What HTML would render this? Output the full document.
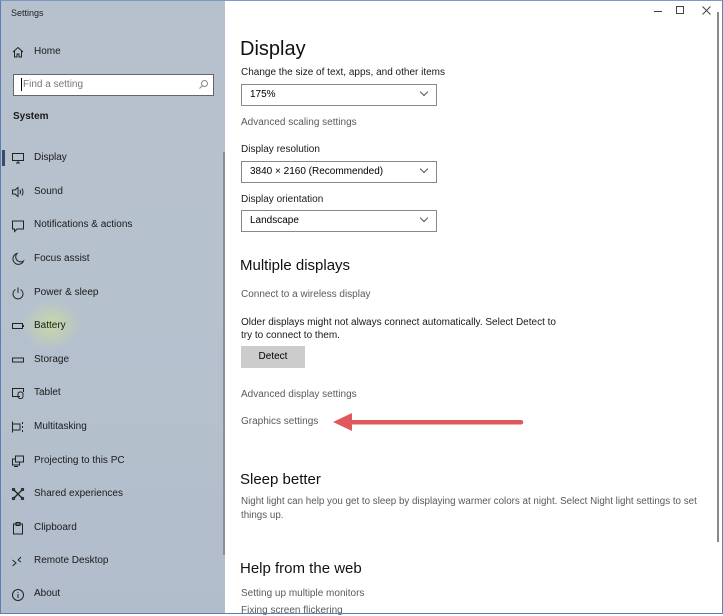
<!DOCTYPE html>
<html><head><meta charset="utf-8"><style>
*{margin:0;padding:0;box-sizing:border-box}
body{width:723px;height:614px;overflow:hidden;font-family:"Liberation Sans",sans-serif;background:#fff;position:relative;color:#000}
.a{position:absolute;white-space:nowrap}
#side{position:absolute;left:0;top:0;width:225px;height:614px;background:linear-gradient(180deg,#b6c1cd 0%,#b5c1cd 50%,#b2bdcb 100%);border-left:1px solid #5b7fb5}
.nav{position:absolute;left:33px;font-size:10px;color:#1a1a1a}
.ic{position:absolute;left:10px;width:14px;height:14px}
.t{font-size:10px;color:#1a1a1a}
.g{font-size:10px;color:#5a5a5a}
.dd{position:absolute;left:241px;width:196px;height:22px;border:1.5px solid #888;background:#fff;font-size:10px;padding:4px 8px}
.dd:after{content:"";position:absolute;right:9px;top:4px;width:5px;height:5px;border-right:1px solid #555;border-bottom:1px solid #555;transform:rotate(45deg)}
h2{position:absolute;font-weight:normal;font-size:15px;color:#111;white-space:nowrap}
</style></head><body>
<div style="position:absolute;left:0;top:0;width:723px;height:614px;border:1px solid #5b7fb5;border-top:1px solid #7a9ac8;z-index:5;pointer-events:none"></div>
<div id="side">
<div class="a" style="left:10px;top:8px;font-size:9px;color:#222">Settings</div>
<svg class="ic" style="top:45px" viewBox="0 0 14 14" fill="none" stroke="#222" stroke-width="1"><path d="M2 7 L7 2.5 L12 7 M3.5 6 V12 H6 V9 H8 V12 H10.5 V6"/></svg>
<div class="nav" style="top:46px">Home</div>
<div style="position:absolute;left:12px;top:74px;width:201px;height:22px;background:#fff;border:1.5px solid #666"></div>
<div style="position:absolute;left:20px;top:78px;width:1px;height:13px;background:#000"></div>
<div class="a" style="left:22px;top:79px;font-size:10px;color:#777">Find a setting</div>
<svg style="position:absolute;left:197px;top:79px;width:11px;height:11px" viewBox="0 0 11 11" fill="none" stroke="#888"><circle cx="6.5" cy="4.5" r="3"/><path d="M4.5 6.5 L1.5 9.5"/></svg>
<div class="a" style="left:12px;top:111px;font-size:10px;font-weight:bold;color:#1a1a1a">System</div>
<div style="position:absolute;left:1px;top:150px;width:3px;height:16px;background:#3b4a66"></div>
<div style="position:absolute;left:222px;top:152px;width:2px;height:403px;background:#8a8f96"></div>
<svg class="ic" style="top:151px" viewBox="0 0 14 14" fill="none" stroke="#222"><rect x="1.5" y="2.5" width="11" height="7"/><path d="M5 12 H9 M7 9.5 V12"/></svg><div class="nav" style="top:152px">Display</div>
<svg class="ic" style="top:185px" viewBox="0 0 14 14" fill="none" stroke="#222"><path d="M1.5 5 H4 L7 2.5 V11.5 L4 9 H1.5Z M9 5 Q10 7 9 9 M11 3.5 Q13 7 11 10.5"/></svg><div class="nav" style="top:186px">Sound</div>
<svg class="ic" style="top:219px" viewBox="0 0 14 14" fill="none" stroke="#222"><path d="M1.5 2 H12.5 V10 H6 L3.5 12.5 V10 H1.5Z"/></svg><div class="nav" style="top:219px">Notifications &amp; actions</div>
<svg class="ic" style="top:252px" viewBox="0 0 14 14" fill="none" stroke="#222"><path d="M6 1.5 A5.5 5.5 0 1 0 12.5 9 A5 5 0 0 1 6 1.5Z"/></svg><div class="nav" style="top:253px">Focus assist</div>
<svg class="ic" style="top:286px" viewBox="0 0 14 14" fill="none" stroke="#222"><path d="M4.5 3.5 A5 5 0 1 0 9.5 3.5 M7 1.5 V7"/></svg><div class="nav" style="top:287px">Power &amp; sleep</div>
<div style="position:absolute;left:20px;top:300px;width:60px;height:50px;border-radius:50%;background:radial-gradient(#c8d8a8,rgba(180,200,170,0) 70%)"></div>
<svg class="ic" style="top:319px" viewBox="0 0 14 14" fill="none" stroke="#222"><rect x="1.5" y="4.5" width="10" height="5"/><path d="M12.5 6 V8"/></svg><div class="nav" style="top:320px">Battery</div>
<svg class="ic" style="top:353px" viewBox="0 0 14 14" fill="none" stroke="#222"><rect x="1.5" y="5" width="11" height="4"/></svg><div class="nav" style="top:354px">Storage</div>
<svg class="ic" style="top:386px" viewBox="0 0 14 14" fill="none" stroke="#222"><path d="M9 10.5 H1.5 V2.5 H12.5 V6"/><rect x="7" y="6" width="5" height="6.5" rx="2"/></svg><div class="nav" style="top:387px">Tablet</div>
<svg class="ic" style="top:420px" viewBox="0 0 14 14" fill="none" stroke="#222"><path d="M1.5 1.5 V12.5 M1.5 4 H9 V10 H1.5 M11.5 2 V4 M11.5 6 V8 M11.5 10 V12"/></svg><div class="nav" style="top:421px">Multitasking</div>
<svg class="ic" style="top:454px" viewBox="0 0 14 14" fill="none" stroke="#222"><rect x="4.5" y="2" width="8" height="6"/><path d="M4.5 5 H1.5 V11 H8.5 V8 M3 12.5 H7"/></svg><div class="nav" style="top:455px">Projecting to this PC</div>
<svg class="ic" style="top:487px" viewBox="0 0 14 14" fill="none" stroke="#222" stroke-width="1.3"><path d="M3 3 L11 11 M11 3 L3 11"/><circle cx="2.5" cy="2.5" r="1"/><circle cx="11.5" cy="2.5" r="1"/><circle cx="2.5" cy="11.5" r="1"/><circle cx="11.5" cy="11.5" r="1"/></svg><div class="nav" style="top:488px">Shared experiences</div>
<svg class="ic" style="top:521px" viewBox="0 0 14 14" fill="none" stroke="#222"><rect x="2.5" y="3" width="9" height="10"/><rect x="5" y="1.5" width="4" height="3"/></svg><div class="nav" style="top:522px">Clipboard</div>
<svg class="ic" style="top:554px" viewBox="0 0 14 14" fill="none" stroke="#222"><path d="M1.5 6 L5 9 L1.5 12 M7 6 L10 3 M7 6 L10 8"/></svg><div class="nav" style="top:555px">Remote Desktop</div>
<svg class="ic" style="top:588px" viewBox="0 0 14 14" fill="none" stroke="#222"><circle cx="7" cy="7" r="5.5"/><path d="M7 6 V10 M7 4 V4.8"/></svg><div class="nav" style="top:588px">About</div>
</div>
<div class="a" style="left:654px;top:11px;width:8px;height:1px;background:#444"></div>
<div class="a" style="left:676px;top:6px;width:8px;height:8px;border:1px solid #444"></div>
<svg style="position:absolute;left:702px;top:6px;width:9px;height:9px" viewBox="0 0 9 9" stroke="#444"><path d="M0.5 0.5 L8.5 8.5 M8.5 0.5 L0.5 8.5"/></svg>
<div style="position:absolute;left:717px;top:12px;width:2px;height:530px;background:#8a8a8a"></div>
<div class="a" style="left:240px;top:38px;font-size:20px;color:#111">Display</div>
<div class="a t" style="left:241px;top:67px">Change the size of text, apps, and other items</div>
<div class="dd" style="top:84px">175%</div>
<div class="a g" style="left:241px;top:117px">Advanced scaling settings</div>
<div class="a t" style="left:241px;top:144px">Display resolution</div>
<div class="dd" style="top:161px">3840 × 2160 (Recommended)</div>
<div class="a t" style="left:241px;top:194px">Display orientation</div>
<div class="dd" style="top:210px">Landscape</div>
<h2 style="left:240px;top:257px">Multiple displays</h2>
<div class="a g" style="left:241px;top:289px">Connect to a wireless display</div>
<div class="a t" style="left:241px;top:316px;line-height:13px">Older displays might not always connect automatically. Select Detect to<br>try to connect to them.</div>
<div class="a" style="left:241px;top:346px;width:64px;height:22px;background:#ccc;font-size:10px;text-align:center;line-height:22px">Detect</div>
<div class="a g" style="left:241px;top:389px">Advanced display settings</div>
<div class="a g" style="left:241px;top:416px">Graphics settings</div>
<svg style="position:absolute;left:330px;top:410px;width:200px;height:26px" viewBox="0 0 200 26"><path d="M22 10 H191 a2 2 0 0 1 0 4.5 H22Z" fill="#e0585d"/><path d="M3 12 L22 3 L22 21Z" fill="#e0585d"/></svg>
<h2 style="left:240px;top:471px">Sleep better</h2>
<div class="a g" style="left:241px;top:495px;line-height:14px;font-size:9.8px">Night light can help you get to sleep by displaying warmer colors at night. Select Night light settings to set<br>things up.</div>
<h2 style="left:240px;top:560px">Help from the web</h2>
<div class="a g" style="left:241px;top:588px">Setting up multiple monitors</div>
<div class="a g" style="left:241px;top:605px">Fixing screen flickering</div>
</body></html>
